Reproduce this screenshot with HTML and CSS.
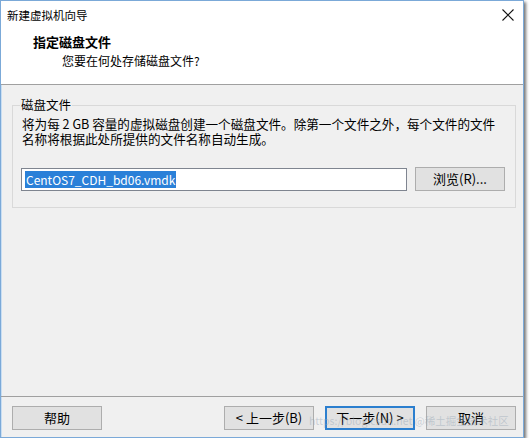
FILE: index.html
```html
<!DOCTYPE html>
<html lang="zh-CN">
<head>
<meta charset="utf-8">
<title>新建虚拟机向导</title>
<link rel="stylesheet" href="styles.css">
</head>
<body>
<div class="window">
  <div class="titlebar">
    <span class="title">新建虚拟机向导</span>
    <svg class="close" width="12" height="12" viewBox="0 0 12 12"><path d="M0.5 0.5 L11.5 11.5 M11.5 0.5 L0.5 11.5" stroke="#111" stroke-width="1.1" fill="none"/></svg>
  </div>
  <div class="header">
    <div class="h-title">指定磁盘文件</div>
    <div class="h-sub">您要在何处存储磁盘文件?</div>
  </div>
  <div class="content">
    <fieldset class="group">
      <legend class="legend">磁盘文件</legend>
      <p class="desc">将为每 2 GB 容量的虚拟磁盘创建一个磁盘文件。除第一个文件之外，每个文件的文件</p>
      <p class="desc">名称将根据此处所提供的文件名称自动生成。</p>
      <div class="file-row">
        <div class="input"><span class="sel">CentOS7_CDH_bd06.vmdk</span></div>
        <button class="btn">浏览(R)...</button>
      </div>
    </fieldset>
  </div>
  <div class="footer">
    <button class="btn">帮助</button>
    <div class="nav">
      <button class="btn">&lt; 上一步(B)</button>
      <button class="btn default">下一步(N) &gt;</button>
      <button class="btn">取消</button>
    </div>
    <div class="watermark">https://blog.csdn.net @稀土掘金技术社区</div>
  </div>
</div>
</body>
</html>
```
FILE: styles.css
```css
html, body {
  margin: 0;
  padding: 0;
  background: #fff;
}
body {
  font-family: "Noto Sans CJK SC", "Noto Sans", sans-serif;
  color: #000;
}
.window {
  width: 524px;
  height: 438px;
  box-sizing: border-box;
  border: 1px solid #7ba9d8;
  box-shadow: 2px 2px 3px rgba(0, 0, 0, 0.55), inset 1px 0 0 #c9def2;
  background: #f0f0f0;
  display: flex;
  flex-direction: column;
}
.titlebar {
  height: 27px;
  background: #fff;
  display: flex;
  align-items: center;
  justify-content: space-between;
  padding: 0 9px 0 6px;
}
.title {
  font-size: 11.5px;
  line-height: 16px;
}
.close {
  display: block;
}
.header {
  background: #fff;
  height: 57px;
  padding: 5px 0 0 32px;
  box-sizing: border-box;
  border-bottom: 1px solid #a0a0a0;
}
.h-title {
  font-size: 13px;
  font-weight: bold;
  line-height: 18px;
}
.h-sub {
  font-size: 12px;
  line-height: 16px;
  margin: 2px 0 0 29px;
}
.content {
  flex: 1;
  padding: 12px 7px 0 11px;
  border-bottom: 1px solid #a0a0a0;
}
.group {
  margin: 0;
  border: 1px solid #d9d9d9;
  padding: 3px 9px 16px 9px;
}
.legend {
  font-size: 12.5px;
  line-height: 16px;
  padding: 0 1px;
  margin-left: -2px;
}
.desc {
  margin: 0;
  font-size: 12.6px;
  line-height: 15px;
  white-space: nowrap;
}
.file-row {
  display: flex;
  align-items: flex-start;
  gap: 8px;
  margin-top: 22px;
  margin-left: -1px;
}
.input {
  width: 386px;
  height: 23px;
  box-sizing: border-box;
  border: 1px solid #7f8590;
  background: #fff;
  padding: 2px 0 0 3px;
  font-size: 12px;
  line-height: 17px;
}
.sel {
  background: #2a80d8;
  color: #fff;
  display: inline-block;
  padding: 0 1px;
}
.btn {
  width: 90px;
  height: 24px;
  box-sizing: border-box;
  border: 1px solid #adadad;
  background: #e1e1e1;
  font-family: "Noto Sans CJK SC", "Noto Sans", sans-serif;
  font-size: 13px;
  line-height: 20px;
  padding: 0;
  color: #000;
}
.file-row .btn {
  margin-top: -1px;
}
.footer {
  position: relative;
  height: 40px;
  box-sizing: border-box;
  padding: 9px 7px 0 11px;
  display: flex;
  justify-content: space-between;
  align-items: flex-start;
}
.nav {
  display: flex;
  gap: 11px;
}
.btn.default {
  border: 2px solid #2b7fcf;
}
.watermark {
  position: absolute;
  left: 308px;
  top: 17px;
  font-size: 10.5px;
  line-height: 13px;
  color: rgba(150, 165, 180, 0.45);
  white-space: nowrap;
  pointer-events: none;
}
```
